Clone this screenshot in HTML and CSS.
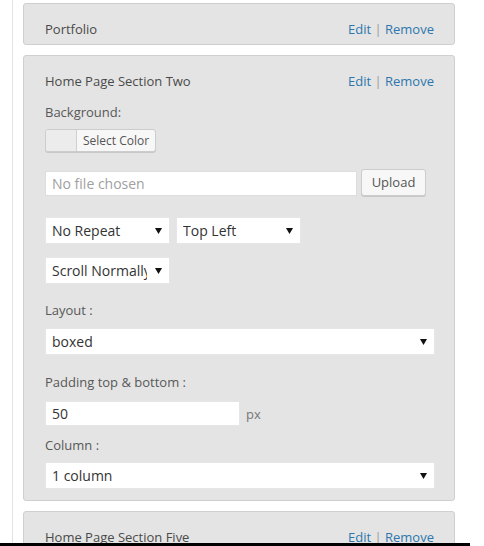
FILE: index.html
```html
<!DOCTYPE html>
<html>
<head>
<meta charset="utf-8">
<link rel="stylesheet" href="styles.css">
</head>
<body>
<div class="viewport">
  <div class="rail">
    <div class="panel">
      <div class="panel-head">
        <span class="title">Portfolio</span>
        <span class="actions"><a class="link">Edit</a> <span class="sep">|</span> <a class="link">Remove</a></span>
      </div>
    </div>

    <div class="panel">
      <div class="panel-head">
        <span class="title">Home Page Section Two</span>
        <span class="actions"><a class="link">Edit</a> <span class="sep">|</span> <a class="link">Remove</a></span>
      </div>
      <div class="panel-body">
        <div class="label label-bg">Background:</div>
        <div class="color-btn"><span class="swatch"></span><span class="color-text">Select Color</span></div>
        <div class="file-row">
          <div class="file-input">No file chosen</div>
          <div class="btn">Upload</div>
        </div>
        <div class="select-row">
          <div class="select w124"><span class="sel-text">No Repeat</span><svg class="arrow" width="7" height="7" viewBox="0 0 7 7"><polygon points="0,1 7,1 3.5,7" fill="#111"/></svg></div>
          <div class="select w124"><span class="sel-text">Top Left</span><svg class="arrow" width="7" height="7" viewBox="0 0 7 7"><polygon points="0,1 7,1 3.5,7" fill="#111"/></svg></div>
        </div>
        <div class="select-row row-scroll">
          <div class="select w124"><span class="sel-text">Scroll Normally</span><svg class="arrow" width="7" height="7" viewBox="0 0 7 7"><polygon points="0,1 7,1 3.5,7" fill="#111"/></svg></div>
        </div>
        <div class="label label-layout">Layout :</div>
        <div class="select full sel-layout"><span class="sel-text">boxed</span><svg class="arrow" width="7" height="7" viewBox="0 0 7 7"><polygon points="0,1 7,1 3.5,7" fill="#111"/></svg></div>
        <div class="label label-pad">Padding top &amp; bottom :</div>
        <div class="px-row">
          <div class="text-input">50</div>
          <span class="unit">px</span>
        </div>
        <div class="label label-col">Column :</div>
        <div class="select full sel-col"><span class="sel-text">1 column</span><svg class="arrow" width="7" height="7" viewBox="0 0 7 7"><polygon points="0,1 7,1 3.5,7" fill="#111"/></svg></div>
      </div>
    </div>

    <div class="panel">
      <div class="panel-head">
        <span class="title">Home Page Section Five</span>
        <span class="actions"><a class="link">Edit</a> <span class="sep">|</span> <a class="link">Remove</a></span>
      </div>
    </div>
  </div>
</div>
<div class="bottom-bar"></div>
</body>
</html>
```
FILE: styles.css
```css
html, body {
  margin: 0;
  padding: 0;
  background: #fff;
}
body {
  font-family: "Open Sans", "Liberation Sans", sans-serif;
  font-size: 13px;
  color: #4a4a4a;
}
.viewport {
  height: 543px;
  overflow: hidden;
  padding-left: 12px;
}
.rail {
  border-left: 1px solid #e3e3e3;
  padding: 3px 0 0 10px;
  height: 600px;
  width: 432px;
}
.panel {
  background: #e4e4e4;
  border: 1px solid #cfcfcf;
  border-radius: 3px;
  padding: 16px 20px 6px 21px;
  margin-bottom: 10px;
}
.panel-head {
  display: flex;
  justify-content: space-between;
  align-items: center;
  height: 18px;
  line-height: 18px;
}
.title {
  color: #4a4a4a;
}
.actions {
  white-space: nowrap;
}
.link {
  color: #2c77ad;
  text-decoration: none;
}
.sep {
  color: #999;
}
.panel-body {
  padding-bottom: 5px;
}
.label {
  color: #585858;
  line-height: 18px;
  height: 18px;
}
.label-bg { margin-top: 13px; }
.color-btn {
  margin-top: 8px;
  display: flex;
  height: 21px;
  border: 1px solid #ccc;
  border-radius: 3px;
  background: #f7f7f7;
  box-shadow: 0 1px 0 #c8c8c8;
  width: 109px;
  box-sizing: content-box;
}
.swatch {
  width: 30px;
  border-right: 1px solid #d0d0d0;
  background: #ececec;
  border-radius: 3px 0 0 3px;
}
.color-text {
  font-size: 12px;
  line-height: 21px;
  color: #555;
  padding-left: 6px;
}
.file-row {
  margin-top: 17px;
  display: flex;
  align-items: flex-end;
}
.file-input {
  width: 312px;
  height: 25px;
  box-sizing: border-box;
  background: #fff;
  border: 1px solid #ddd;
  font-size: 14px;
  line-height: 23px;
  padding-left: 6px;
  color: #a0a0a0;
}
.btn {
  margin-left: 4px;
  width: 65px;
  height: 27px;
  box-sizing: border-box;
  border: 1px solid #ccc;
  border-radius: 3px;
  background: #f7f7f7;
  box-shadow: 0 1px 0 #c8c8c8;
  text-align: center;
  line-height: 25px;
  color: #555;
  font-size: 13px;
}
.select-row {
  margin-top: 21px;
  display: flex;
  gap: 6px;
}
.row-scroll { margin-top: 13px; }
.select {
  display: flex;
  align-items: center;
  height: 27px;
  box-sizing: border-box;
  background: #fff;
  border: 1px solid #e6e6e6;
  padding: 0 7px 0 6px;
  font-size: 14px;
  color: #333;
}
.w124 { width: 125px; }
.full { width: 390px; }
.sel-text {
  flex: 1;
  min-width: 0;
  overflow: hidden;
  white-space: nowrap;
  margin-right: 8px;
}
.arrow { flex: none; }
.label-layout { margin-top: 17px; }
.sel-layout { margin-top: 9px; }
.label-pad { margin-top: 18px; }
.px-row {
  margin-top: 10px;
  display: flex;
  align-items: center;
}
.text-input {
  width: 195px;
  height: 25px;
  box-sizing: border-box;
  background: #fff;
  border: 1px solid #e6e6e6;
  padding-left: 6px;
  font-size: 14px;
  line-height: 23px;
  color: #333;
}
.unit {
  margin-left: 6px;
  color: #777;
}
.label-col { margin-top: 10px; }
.sel-col { margin-top: 8px; }
.bottom-bar {
  height: 3px;
  width: 470px;
  background: #000;
}
```
